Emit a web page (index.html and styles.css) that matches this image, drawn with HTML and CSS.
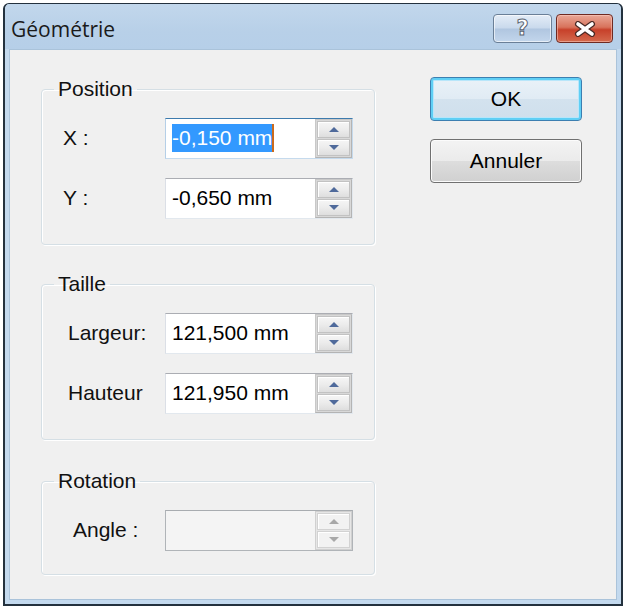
FILE: index.html
```html
<!DOCTYPE html>
<html>
<head>
    <meta charset="utf-8">
    <title>Géométrie</title>
    <link rel="stylesheet" href="styles.css">
</head>
<body>
    <div class="window">
        <div class="titlebar">
            <span class="title">Géométrie</span>
            <div class="caption-btns">
                <div class="cap-btn help"><span class="help-glyph">?</span></div>
                <div class="cap-btn close">
                    <svg width="24" height="16" viewBox="0 0 24 16">
                        <path d="M5 3 L19 13 M19 3 L5 13" stroke="#4a2a26" stroke-width="6" stroke-linecap="round"/>
                        <path d="M5 3 L19 13 M19 3 L5 13" stroke="#fff" stroke-width="3.6" stroke-linecap="round"/>
                    </svg>
                </div>
            </div>
        </div>
        <div class="frame">
            <div class="client">
                <div class="groups">
                    <fieldset class="group">
                        <legend>Position</legend>
                        <div class="row">
                            <label>X :</label>
                            <div class="spin-input focused">
                                <div class="value"><span class="sel">-0,150 mm</span><span class="caret"></span></div>
                                <div class="spinner">
                                    <div class="spin-btn"><span class="arrow up"></span></div>
                                    <div class="spin-btn"><span class="arrow down"></span></div>
                                </div>
                            </div>
                        </div>
                        <div class="row">
                            <label>Y :</label>
                            <div class="spin-input">
                                <div class="value">-0,650 mm</div>
                                <div class="spinner">
                                    <div class="spin-btn"><span class="arrow up"></span></div>
                                    <div class="spin-btn"><span class="arrow down"></span></div>
                                </div>
                            </div>
                        </div>
                    </fieldset>

                    <fieldset class="group">
                        <legend>Taille</legend>
                        <div class="row">
                            <label class="indent">Largeur:</label>
                            <div class="spin-input">
                                <div class="value">121,500 mm</div>
                                <div class="spinner">
                                    <div class="spin-btn"><span class="arrow up"></span></div>
                                    <div class="spin-btn"><span class="arrow down"></span></div>
                                </div>
                            </div>
                        </div>
                        <div class="row">
                            <label class="indent">Hauteur</label>
                            <div class="spin-input">
                                <div class="value">121,950 mm</div>
                                <div class="spinner">
                                    <div class="spin-btn"><span class="arrow up"></span></div>
                                    <div class="spin-btn"><span class="arrow down"></span></div>
                                </div>
                            </div>
                        </div>
                    </fieldset>

                    <fieldset class="group group-last">
                        <legend>Rotation</legend>
                        <div class="row">
                            <label class="indent-more">Angle :</label>
                            <div class="spin-input disabled">
                                <div class="value"></div>
                                <div class="spinner">
                                    <div class="spin-btn"><span class="arrow up"></span></div>
                                    <div class="spin-btn"><span class="arrow down"></span></div>
                                </div>
                            </div>
                        </div>
                    </fieldset>
                </div>

                <div class="actions">
                    <button class="btn btn-default">OK</button>
                    <button class="btn">Annuler</button>
                </div>
            </div>
        </div>
    </div>
</body>
</html>
```

FILE: styles.css
```css
body {
    margin: 0;
    padding: 0;
    background-color: #fff;
    font-family: "Liberation Sans", Arial, sans-serif;
}

.window {
    box-sizing: border-box;
    width: 620px;
    height: 603px;
    margin: 3px 3px 0 3px;
    border: 2px solid #23313e;
    border-top-width: 1px;
    border-radius: 6px 6px 0 0;
    display: flex;
    flex-direction: column;
    background-color: #c3d9ee;
}

.titlebar {
    box-sizing: border-box;
    height: 45px;
    padding: 4px 8px 0 6px;
    display: flex;
    align-items: center;
    justify-content: space-between;
    background: linear-gradient(to bottom, #c2d7ec 0%, #b8d0e8 60%, #b6cfe8 100%);
    border-radius: 5px 5px 0 0;
}

.title {
    font-family: "Open Sans", sans-serif;
    font-size: 21px;
    color: #1a1a1a;
}

.caption-btns {
    display: flex;
    gap: 4px;
}

.cap-btn {
    box-sizing: border-box;
    height: 29px;
    border-radius: 4px;
    display: flex;
    align-items: center;
    justify-content: center;
}

.help {
    width: 59px;
    border: 1px solid #6a7f97;
    background: linear-gradient(to bottom, #e4edf7 0%, #c9d9ec 48%, #b0c6e0 52%, #c3d6ec 100%);
    box-shadow: inset 0 0 0 1px rgba(255, 255, 255, 0.6);
}

.help-glyph {
    font-family: "DejaVu Sans", sans-serif;
    font-weight: bold;
    font-size: 21px;
    line-height: 21px;
    color: #fff;
    -webkit-text-stroke: 1px #5b6470;
}

.close {
    width: 57px;
    border: 1px solid #6e2a22;
    background: linear-gradient(to bottom, #e9a898 0%, #d8735c 45%, #c7402a 55%, #d46a4e 100%);
    box-shadow: inset 0 0 0 1px rgba(255, 210, 200, 0.5);
}

.frame {
    flex: 1;
    padding: 0 4px 4px 4px;
    display: flex;
}

.client {
    flex: 1;
    box-sizing: border-box;
    background-color: #f0f0f0;
    border: 1px solid #aac3da;
    display: flex;
    padding: 0 0 0 31px;
}

.groups {
    width: 334px;
    padding-top: 28px;
}

.group {
    margin: 0;
    padding: 18px 0 26px 0;
    border: 1px solid #d5dfe5;
    border-radius: 4px;
    box-shadow: inset 1px 1px 0 #fff, 1px 1px 0 #fff;
}

.group + .group {
    margin-top: 28px;
}

.group-last {
    margin-top: 30px !important;
    padding-bottom: 24px;
}

.group legend {
    margin-left: 12px;
    padding: 0 4px;
    font-size: 21px;
    line-height: 22px;
    color: #111;
}

.row {
    display: flex;
    align-items: center;
    height: 40px;
    padding-left: 21px;
}

.row + .row {
    margin-top: 20px;
}

.row label {
    width: 102px;
    font-size: 21px;
    color: #111;
}

.row label.indent {
    width: 97px;
    margin-left: 5px;
}

.row label.indent-more {
    width: 92px;
    margin-left: 10px;
}

.spin-input {
    box-sizing: border-box;
    width: 188px;
    height: 41px;
    display: flex;
    align-items: stretch;
    background-color: #fff;
    border: 1px solid #e2e8ee;
    border-top-color: #abadb3;
    border-left-color: #dbdfe6;
}

.spin-input.focused {
    border-color: #c5daed;
    border-top-color: #3d7bad;
    border-left-color: #b5cfe7;
}

.spin-input.disabled {
    background-color: #f4f4f4;
    border: 1px solid #b0b4b8;
    border-top-color: #a8acb0;
}

.value {
    flex: 1;
    display: flex;
    align-items: center;
    padding-left: 6px;
    font-size: 21px;
    color: #000;
    white-space: nowrap;
}

.sel {
    background-color: #3399ff;
    color: #fff;
    line-height: 28px;
}

.caret {
    width: 2px;
    height: 28px;
    background-color: #cc6a1c;
}

.spinner {
    box-sizing: border-box;
    width: 37px;
    padding: 1px;
    display: flex;
    flex-direction: column;
    border: 1px solid #c8c8c8;
    border-right-color: #b4b4b4;
    border-bottom-color: #b4b4b4;
    background-color: #d8d8d8;
    gap: 1px;
}

.spin-btn {
    flex: 1;
    display: flex;
    align-items: center;
    justify-content: center;
    background: linear-gradient(to bottom, #f6f6f6 0%, #ececec 50%, #dedede 100%);
    border: 1px solid #c2c2c2;
    box-shadow: inset 1px 1px 0 #fff;
}

.arrow {
    width: 0;
    height: 0;
    border-left: 5px solid transparent;
    border-right: 5px solid transparent;
}

.arrow.up {
    border-bottom: 5px solid #4f6a9b;
}

.arrow.down {
    border-top: 5px solid #4f6a9b;
}

.disabled .spinner {
    background-color: #e6e6e6;
    border-color: #d0d0d0;
}

.disabled .spin-btn {
    background: #f2f2f2;
    border-color: #d2d2d2;
}

.disabled .arrow.up {
    border-bottom-color: #a8a8a8;
}

.disabled .arrow.down {
    border-top-color: #a8a8a8;
}

.actions {
    margin-left: 55px;
    padding-top: 27px;
    display: flex;
    flex-direction: column;
    gap: 18px;
}

.btn {
    box-sizing: border-box;
    width: 152px;
    height: 44px;
    font-family: "Liberation Sans", Arial, sans-serif;
    font-size: 21px;
    color: #000;
    border: 1px solid #707070;
    border-radius: 4px;
    background: linear-gradient(to bottom, #f3f3f3 0%, #ebebeb 50%, #dddddd 51%, #d0d0d0 100%);
    box-shadow: inset 0 0 0 1px #fbfbfb;
    padding: 0;
}

.btn-default {
    border-color: #3c7fb1;
    background: linear-gradient(to bottom, #eaf2f8 0%, #e0ebf4 50%, #d3e2ee 51%, #cfdfec 100%);
    box-shadow: inset 0 0 0 2px #5fcff5, inset 0 0 0 3px #b8e6fa;
}
```
